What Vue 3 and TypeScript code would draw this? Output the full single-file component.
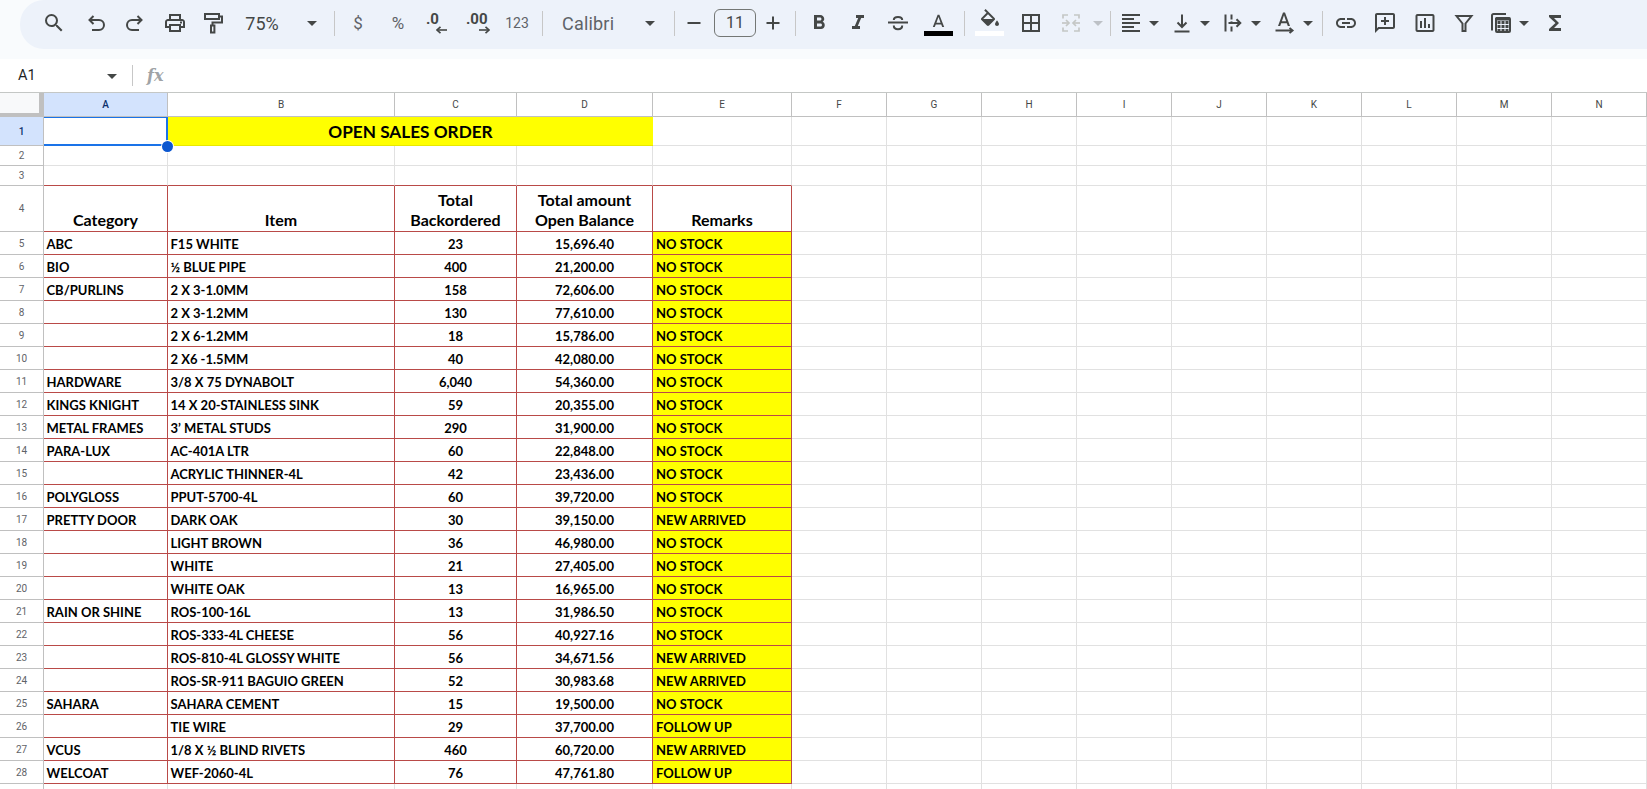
<script setup lang="ts">
import { computed } from 'vue'

type Tool = { k: string; c: number; w: number; text?: string; p?: string[]; s?: string[]; off?: boolean; cls?: string }

const raw: Tool[] = [
  { k: 'icon', c: 54, w: 24, p: ['M15.5 14h-.79l-.28-.27A6.471 6.471 0 0 0 16 9.5 6.5 6.5 0 1 0 9.5 16c1.61 0 3.09-.59 4.23-1.57l.27.28v.79l5 4.99L20.49 19l-4.99-5zm-6 0C7.01 14 5 11.99 5 9.5S7.01 5 9.5 5 14 7.01 14 9.5 11.99 14 9.5 14z'] },
  { k: 'icon', c: 96, w: 24, s: ['M9.5 5 5.5 9l4 4', 'M5.5 9H15a5 5 0 0 1 0 10H8'] },
  { k: 'icon', c: 135, w: 24, s: ['M14.5 5l4 4-4 4', 'M18.5 9H9a5 5 0 0 0 0 10h7'] },
  { k: 'icon', c: 175, w: 24, p: ['M19 8h-1V3H6v5H5c-1.66 0-3 1.34-3 3v6h4v4h12v-4h4v-6c0-1.66-1.34-3-3-3zM8 5h8v3H8V5zm8 14H8v-4h8v4zm2-4v-2H6v2H4v-4c0-.55.45-1 1-1h14c.55 0 1 .45 1 1v4h-2z', 'M17 10.5h2v2h-2z'] },
  { k: 'icon', c: 213, w: 24, s: ['M4 3h14v5H4z', 'M18 5.5h3v6H11.5v3', 'M10 14.5h3.4v7H10z'] },
  { k: 'text', c: 262, w: 38, text: '75%', cls: 'zoomtxt' },
  { k: 'caret', c: 312, w: 10 },
  { k: 'sep', c: 334.5, w: 1 },
  { k: 'text', c: 358, w: 12, text: '$', cls: 'sym' },
  { k: 'text', c: 398, w: 18, text: '%', cls: 'sym' },
  { k: 'dec', c: 437, w: 22, text: '.0', cls: 'left' },
  { k: 'dec', c: 478, w: 24, text: '.00', cls: 'right' },
  { k: 'text', c: 517, w: 26, text: '123', cls: 'num' },
  { k: 'sep', c: 542.5, w: 1 },
  { k: 'text', c: 590, w: 56, text: 'Calibri', cls: 'fontname' },
  { k: 'caret', c: 650, w: 10 },
  { k: 'sep', c: 674.5, w: 1 },
  { k: 'icon', c: 694, w: 24, p: ['M5.5 11h13v2h-13z'] },
  { k: 'box', c: 735, w: 42, text: '11' },
  { k: 'icon', c: 773, w: 24, p: ['M11 5.5h2V11h5.5v2H13v5.5h-2V13H5.5v-2H11z'] },
  { k: 'sep', c: 795, w: 1 },
  { k: 'icon', c: 819, w: 24, p: ['M15.6 10.79c.97-.67 1.65-1.77 1.65-2.79 0-2.26-1.75-4-4-4H7v14h7.04c2.09 0 3.71-1.7 3.71-3.79 0-1.52-.86-2.82-2.15-3.42zM10 6.5h3c.83 0 1.5.67 1.5 1.5s-.67 1.5-1.5 1.5h-3v-3zm3.5 9H10v-3h3.5c.83 0 1.5.67 1.5 1.5s-.67 1.5-1.5 1.5z'] },
  { k: 'icon', c: 858, w: 24, p: ['M10 4v3h2.21l-3.42 8H6v3h8v-3h-2.21l3.42-8H18V4z'] },
  { k: 'icon', c: 898, w: 24, s: ['M2 11.5h20', 'M7.8 9C7.8 5 16.2 5 16.2 9', 'M7.8 14.5c0 5 8.4 5 8.4 0'] },
  { k: 'swatch', c: 938.5, w: 29, cls: 'ink', p: ['M11 2 5.5 16h2.25l1.12-3h6.25l1.12 3h2.25L13 2h-2zm-1.38 9L12 4.67 14.38 11H9.62z'] },
  { k: 'sep', c: 964.5, w: 1 },
  { k: 'swatch', c: 989.5, w: 29, cls: 'paint', p: ['M16.56 8.94L7.62 0 6.21 1.41l2.38 2.38-5.15 5.15c-.59.59-.59 1.54 0 2.12l5.5 5.5c.29.29.68.44 1.06.44s.77-.15 1.06-.44l5.5-5.5c.59-.58.59-1.53 0-2.12zM5.21 10L10 5.21 14.79 10H5.21z', 'M19 11.5s-2 2.17-2 3.5c0 1.1.9 2 2 2s2-.9 2-2c0-1.33-2-3.5-2-3.5z'] },
  { k: 'icon', c: 1031, w: 24, p: ['M3 3v18h18V3H3zm8 16H5v-6h6v6zm0-8H5V5h6v6zm8 8h-6v-6h6v6zm0-8h-6V5h6v6z'] },
  { k: 'icon', c: 1071, w: 24, off: true, s: ['M9 4H4v3.5', 'M4 16.5V20h5', 'M15 4h5v3.5', 'M20 16.5V20h-5', 'M3 12h6.5', 'M7 9l3 3-3 3', 'M21 12h-6.5', 'M17 9l-3 3 3 3'] },
  { k: 'caret', c: 1098, w: 10, off: true },
  { k: 'sep', c: 1110.5, w: 1 },
  { k: 'icon', c: 1131, w: 24, p: ['M3 3h18v2H3zM3 7h12v2H3zM3 11h18v2H3zM3 15h12v2H3zM3 19h18v2H3z'] },
  { k: 'caret', c: 1154, w: 10 },
  { k: 'icon', c: 1182, w: 24, s: ['M12 3.5V16', 'M7.5 11.5 12 16l4.5-4.5', 'M4.5 20.5h15'] },
  { k: 'caret', c: 1205, w: 10 },
  { k: 'icon', c: 1233, w: 24, s: ['M4.5 3.5v17', 'M10.5 3.5v5', 'M10.5 10.2v.6', 'M10.5 15.5v5', 'M7.5 12H19', 'M15.5 8.2 19.3 12l-3.8 3.8'] },
  { k: 'caret', c: 1256, w: 10 },
  { k: 'icon', c: 1284, w: 24, p: ['M11 1.5 6 15h2.2l1-2.8h5.6l1 2.8H18L13 1.5h-2zm-1.1 8.8L12 4.2l2.1 6.1H9.9z'], s: ['M3.5 19.5H19.5', 'M17.5 17l3 2.5-3 2.5'] },
  { k: 'caret', c: 1308, w: 10 },
  { k: 'sep', c: 1322.5, w: 1 },
  { k: 'icon', c: 1346, w: 24, p: ['M3.9 12c0-1.71 1.39-3.1 3.1-3.1h4V7H7c-2.76 0-5 2.24-5 5s2.24 5 5 5h4v-1.9H7c-1.71 0-3.1-1.39-3.1-3.1zM8 13h8v-2H8v2zm9-6h-4v1.9h4c1.71 0 3.1 1.39 3.1 3.1s-1.39 3.1-3.1 3.1h-4V17h4c2.76 0 5-2.24 5-5s-2.24-5-5-5z'] },
  { k: 'icon', c: 1385, w: 24, p: ['M20 2H4c-1.1 0-2 .9-2 2v18l4-4h14c1.1 0 2-.9 2-2V4c0-1.1-.9-2-2-2zm0 14H5.17L4 17.17V4h16v12z', 'M11 6h2v3h3v2h-3v3h-2v-3H8V9h3z'] },
  { k: 'icon', c: 1425, w: 24, p: ['M9 17H7v-7h2v7zm4 0h-2V7h2v10zm4 0h-2v-4h2v4zm2.5 2.1h-15V5h15v14.1zm0-16.1h-15c-1.1 0-2 .9-2 2v14c0 1.1.9 2 2 2h15c1.1 0 2-.9 2-2V5c0-1.1-.9-2-2-2z'] },
  { k: 'icon', c: 1464, w: 24, s: ['M4.5 5h15l-6 7.5V20h-3v-7.5z'] },
  { k: 'icon', c: 1501, w: 24, p: ['M8.5 10h3v3h-3zM12.5 10h3v3h-3zM16.5 10h3v3h-3zM8.5 14h3v3h-3zM12.5 14h3v3h-3zM16.5 14h3v3h-3zM8.5 18h3v2h-3zM12.5 18h3v2h-3zM16.5 18h3v2h-3zM7 6.5h14v3H7z'], s: ['M3 19.5V4.5A1.5 1.5 0 0 1 4.5 3H17', 'M7.5 7h12.5a1 1 0 0 1 1 1v12a1 1 0 0 1-1 1H8a1 1 0 0 1-1-1V7.5z'] },
  { k: 'caret', c: 1524, w: 10 },
  { k: 'icon', c: 1555, w: 24, p: ['M18 4H6v2l6.5 6L6 18v2h12v-3h-7l5-5-5-5h7z'] }
]

const tools = computed(() => {
  let edge = 20
  return raw.map((t) => {
    const left = t.c - t.w / 2
    const style = { width: t.w + 'px', marginLeft: left - edge + 'px' }
    edge = left + t.w
    return { ...t, style }
  })
})

const colWidths = [124, 227, 122, 136, 139, 95, 95, 95, 95, 95, 95, 95, 95, 95]
const letters = 'ABCDEFGHIJKLMN'.split('')
const heads = computed(() => letters.map((l, i) => ({ l, w: colWidths[i] })))

type Row = [string, string, string, string, string]
const data: Row[] = [
  ['ABC', 'F15 WHITE', '23', '15,696.40', 'NO STOCK'],
  ['BIO', '½ BLUE PIPE', '400', '21,200.00', 'NO STOCK'],
  ['CB/PURLINS', '2 X 3-1.0MM', '158', '72,606.00', 'NO STOCK'],
  ['', '2 X 3-1.2MM', '130', '77,610.00', 'NO STOCK'],
  ['', '2 X 6-1.2MM', '18', '15,786.00', 'NO STOCK'],
  ['', '2 X6 -1.5MM', '40', '42,080.00', 'NO STOCK'],
  ['HARDWARE', '3/8 X 75 DYNABOLT', '6,040', '54,360.00', 'NO STOCK'],
  ['KINGS KNIGHT', '14 X 20-STAINLESS SINK', '59', '20,355.00', 'NO STOCK'],
  ['METAL FRAMES', '3’ METAL STUDS', '290', '31,900.00', 'NO STOCK'],
  ['PARA-LUX', 'AC-401A LTR', '60', '22,848.00', 'NO STOCK'],
  ['', 'ACRYLIC THINNER-4L', '42', '23,436.00', 'NO STOCK'],
  ['POLYGLOSS', 'PPUT-5700-4L', '60', '39,720.00', 'NO STOCK'],
  ['PRETTY DOOR', 'DARK OAK', '30', '39,150.00', 'NEW ARRIVED'],
  ['', 'LIGHT BROWN', '36', '46,980.00', 'NO STOCK'],
  ['', 'WHITE', '21', '27,405.00', 'NO STOCK'],
  ['', 'WHITE OAK', '13', '16,965.00', 'NO STOCK'],
  ['RAIN OR SHINE', 'ROS-100-16L', '13', '31,986.50', 'NO STOCK'],
  ['', 'ROS-333-4L CHEESE', '56', '40,927.16', 'NO STOCK'],
  ['', 'ROS-810-4L GLOSSY WHITE', '56', '34,671.56', 'NEW ARRIVED'],
  ['', 'ROS-SR-911 BAGUIO GREEN', '52', '30,983.68', 'NEW ARRIVED'],
  ['SAHARA', 'SAHARA CEMENT', '15', '19,500.00', 'NO STOCK'],
  ['', 'TIE WIRE', '29', '37,700.00', 'FOLLOW UP'],
  ['VCUS', '1/8 X ½ BLIND RIVETS', '460', '60,720.00', 'NEW ARRIVED'],
  ['WELCOAT', 'WEF-2060-4L', '76', '47,761.80', 'FOLLOW UP']
]
const blanks = [0, 1, 2, 3, 4, 5, 6, 7, 8]
</script>

<template>
  <div class="app">
    <div class="topband">
      <div class="pill">
        <template v-for="(t, i) in tools" :key="i">
          <svg v-if="t.k === 'icon'" class="ico" :class="{ off: t.off }" :style="t.style" viewBox="0 0 24 24">
            <path v-for="d in t.p" :key="d" :d="d" class="f" />
            <path v-for="d in t.s" :key="d" :d="d" class="l" />
          </svg>
          <span v-else-if="t.k === 'caret'" class="caret" :class="{ off: t.off }" :style="t.style"></span>
          <span v-else-if="t.k === 'sep'" class="sep" :style="t.style"></span>
          <span v-else-if="t.k === 'text'" class="ttext" :class="t.cls" :style="t.style">{{ t.text }}</span>
          <span v-else-if="t.k === 'box'" class="sizebox" :style="t.style">{{ t.text }}</span>
          <span v-else-if="t.k === 'dec'" class="dec" :style="t.style">
            <span class="dectxt">{{ t.text }}</span>
            <svg class="decarrow" :class="t.cls" viewBox="0 0 12 8">
              <path class="l" d="M1 4h10" />
              <path class="l" :d="t.cls === 'left' ? 'M4.5 .8 1 4l3.5 3.2' : 'M7.5 .8 11 4 7.5 7.2'" />
            </svg>
          </span>
          <span v-else class="swatch" :class="t.cls" :style="t.style">
            <svg viewBox="0 0 24 18">
              <path v-for="d in t.p" :key="d" :d="d" class="f" />
            </svg>
            <span class="bar"></span>
          </span>
        </template>
      </div>
    </div>

    <div class="fbar">
      <span class="cellref">A1</span>
      <span class="caret fcaret"></span>
      <span class="sep fsep"></span>
      <span class="fx">fx</span>
    </div>

    <div class="sheet">
      <div class="colheads">
        <div class="corner"></div>
        <div v-for="(h, i) in heads" :key="h.l" class="colhead" :class="{ active: i === 0 }" :style="{ width: h.w + 'px' }">{{ h.l }}</div>
      </div>

      <div class="row r1">
        <div class="rowhead active">1</div>
        <div class="c a selected"></div>
        <div class="title">OPEN SALES ORDER</div>
        <div class="c e"></div>
        <div v-for="n in blanks" :key="n" class="c x"></div>
      </div>
      <div class="row r2">
        <div class="rowhead">2</div>
        <div class="c a"></div><div class="c b"></div><div class="c cc"></div><div class="c d"></div><div class="c e"></div>
        <div v-for="n in blanks" :key="n" class="c x"></div>
      </div>
      <div class="row r3">
        <div class="rowhead">3</div>
        <div class="c a rb"></div><div class="c b rb"></div><div class="c cc rb"></div><div class="c d rb"></div><div class="c e rb"></div>
        <div v-for="n in blanks" :key="n" class="c x"></div>
      </div>
      <div class="row r4">
        <div class="rowhead">4</div>
        <div class="c a red hd">Category</div>
        <div class="c b red hd">Item</div>
        <div class="c cc red hd">Total<br />Backordered</div>
        <div class="c d red hd">Total amount<br />Open Balance</div>
        <div class="c e red hd">Remarks</div>
        <div v-for="n in blanks" :key="n" class="c x"></div>
      </div>
      <div v-for="(r, i) in data" :key="i" class="row rd">
        <div class="rowhead low">{{ i + 5 }}</div>
        <div class="c a red txt">{{ r[0] }}</div>
        <div class="c b red txt">{{ r[1] }}</div>
        <div class="c cc red txt mid">{{ r[2] }}</div>
        <div class="c d red txt mid">{{ r[3] }}</div>
        <div class="c e red txt note">{{ r[4] }}</div>
        <div v-for="n in blanks" :key="n" class="c x"></div>
      </div>
      <div class="row rd">
        <div class="rowhead"></div>
        <div class="c a"></div><div class="c b"></div><div class="c cc"></div><div class="c d"></div><div class="c e"></div>
        <div v-for="n in blanks" :key="n" class="c x"></div>
      </div>

      <div class="handle"></div>
    </div>
  </div>
</template>

<style>
html, body { margin: 0; padding: 0; background: #fff; overflow: hidden; }
</style>

<style scoped>
.app {
  width: 1647px;
  height: 789px;
  overflow: hidden;
  font-family: Roboto, "Liberation Sans", sans-serif;
  color: #444746;
  background: #fff;
}
.topband { height: 59px; background: #f9fbfd; }
.pill {
  height: 49px;
  margin-left: 20px;
  padding-bottom: 3px;
  box-sizing: border-box;
  background: #edf2fa;
  border-radius: 24px 0 0 24px;
  display: flex;
  align-items: center;
}
.ico { height: 24px; flex: none; }
.f { fill: #444746; }
.l { fill: none; stroke: #444746; stroke-width: 2; }
.ico.off .l { stroke: #c4c7c5; stroke-width: 1.7; }
.caret {
  flex: none;
  height: 0;
  box-sizing: border-box;
  border-left: 5px solid transparent;
  border-right: 5px solid transparent;
  border-top: 5px solid #444746;
}
.caret.off { border-top-color: #bdc1c6; }
.sep { flex: none; height: 25px; background: #c7c7c7; }
.ttext { flex: none; text-align: center; white-space: nowrap; }
.zoomtxt { font-size: 18px; }
.sym { font-size: 17px; color: #5f6368; }
.num { font-size: 14px; color: #5f6368; }
.fontname { font-size: 18px; text-align: left; letter-spacing: .2px; color: #5f6368; }
.sizebox {
  flex: none;
  box-sizing: border-box;
  height: 28px;
  border: 1px solid #747775;
  border-radius: 6px;
  text-align: center;
  line-height: 26px;
  font-size: 16px;
}
.dec { flex: none; display: flex; flex-direction: column; height: 24px; position: relative; }
.dectxt { font-size: 15px; font-weight: 700; line-height: 16px; text-align: left; white-space: nowrap; }
.decarrow { position: absolute; right: 0; top: 15px; width: 12px; height: 8px; }
.decarrow .l { stroke-width: 1.6; }
.swatch { flex: none; align-self: flex-start; display: flex; flex-direction: column; align-items: center; }
.swatch svg { display: block; }
.swatch .bar { width: 29px; height: 5px; }
.swatch.ink { margin-top: 13px; }
.swatch.ink svg { width: 21px; height: 15.75px; }
.swatch.ink .bar { background: #000; margin-top: 2.25px; }
.swatch.paint { margin-top: 9px; }
.swatch.paint svg { width: 24px; height: 18px; }
.swatch.paint .bar { background: #fff; margin-top: 4px; }

.fbar {
  height: 34px;
  box-sizing: border-box;
  display: flex;
  align-items: center;
  border-bottom: 1px solid #c4c7c5;
}
.cellref { font-size: 14.5px; color: #1f1f1f; margin-left: 18px; width: 89px; }
.fcaret { width: 10px; margin-top: 1px; }
.fsep { width: 1px; height: 21px; margin-left: 15px; background: #c7c7c7; }
.fx {
  font-family: "DejaVu Serif", "Liberation Serif", serif;
  font-style: italic;
  font-weight: 700;
  font-size: 16px;
  color: #a0a3a6;
  margin-left: 14px;
}

.sheet { position: relative; }
.colheads { display: flex; height: 24px; }
.corner {
  width: 44px;
  box-sizing: border-box;
  flex: none;
  background: #f8f9fa;
  border-right: 5px solid #c0c0c0;
  border-bottom: 4px solid #c0c0c0;
}
.colhead {
  flex: none;
  box-sizing: border-box;
  border-right: 1px solid #c0c0c0;
  border-bottom: 1px solid #c0c0c0;
  font-size: 10px;
  line-height: 23px;
  text-align: center;
  color: #444746;
}
.colhead.active { background: #d3e3fd; color: #0b2f6b; font-weight: 500; }

.row { display: flex; }
.r1 { height: 29px; }
.r2 { height: 20px; }
.r3 { height: 20px; }
.r4 { height: 46px; }
.rd { height: 23px; }
.rowhead {
  flex: none;
  width: 44px;
  box-sizing: border-box;
  border-right: 1px solid #c0c0c0;
  border-bottom: 1px solid #c0c0c0;
  font-size: 10px;
  color: #5f6368;
  display: flex;
  align-items: center;
  justify-content: center;
}
.rowhead.low { padding-top: 1px; }
.rowhead.active { background: #d3e3fd; color: #0b2f6b; font-weight: 500; }

.c {
  flex: none;
  box-sizing: border-box;
  border-right: 1px solid #e1e1e1;
  border-bottom: 1px solid #e1e1e1;
  overflow: hidden;
  white-space: nowrap;
}
.a { width: 124px; }
.b { width: 227px; }
.cc { width: 122px; }
.d { width: 136px; }
.e { width: 139px; }
.x { width: 95px; }
.rb { border-bottom-color: #b94a48; }
.red { border-right-color: #b94a48; border-bottom-color: #b94a48; }
.title {
  flex: none;
  width: 485px;
  box-sizing: border-box;
  background: #ff0;
  color: #000;
  border-bottom: 1px solid #e8e800;
  font-family: Lato, "Liberation Sans", sans-serif;
  font-weight: 700;
  font-size: 17.2px;
  line-height: 30px;
  text-align: center;
}
.hd {
  font-family: Lato, "Liberation Sans", sans-serif;
  font-weight: 700;
  font-size: 16px;
  line-height: 20px;
  color: #000;
  text-align: center;
  display: flex;
  align-items: flex-end;
  justify-content: center;
  padding-bottom: 1px;
}
.txt {
  font-family: Lato, "Liberation Sans", sans-serif;
  font-weight: 700;
  font-size: 13px;
  line-height: 23px;
  color: #000;
  padding-left: 2.5px;
  padding-top: 1px;
}
.mid { text-align: center; padding-left: 0; }
.note { background: #ff0; padding-left: 3px; }

.selected {
  border: none;
  box-shadow: inset 0 1px 0 #1a73e8, inset -2px 0 0 #1a73e8, inset 0 -2px 0 #1a73e8;
}
.handle {
  position: absolute;
  left: 161.5px;
  top: 47.5px;
  width: 11px;
  height: 11px;
  box-sizing: border-box;
  border-radius: 50%;
  background: #0b57d0;
  box-shadow: 0 0 0 1px #fff;
}
</style>
